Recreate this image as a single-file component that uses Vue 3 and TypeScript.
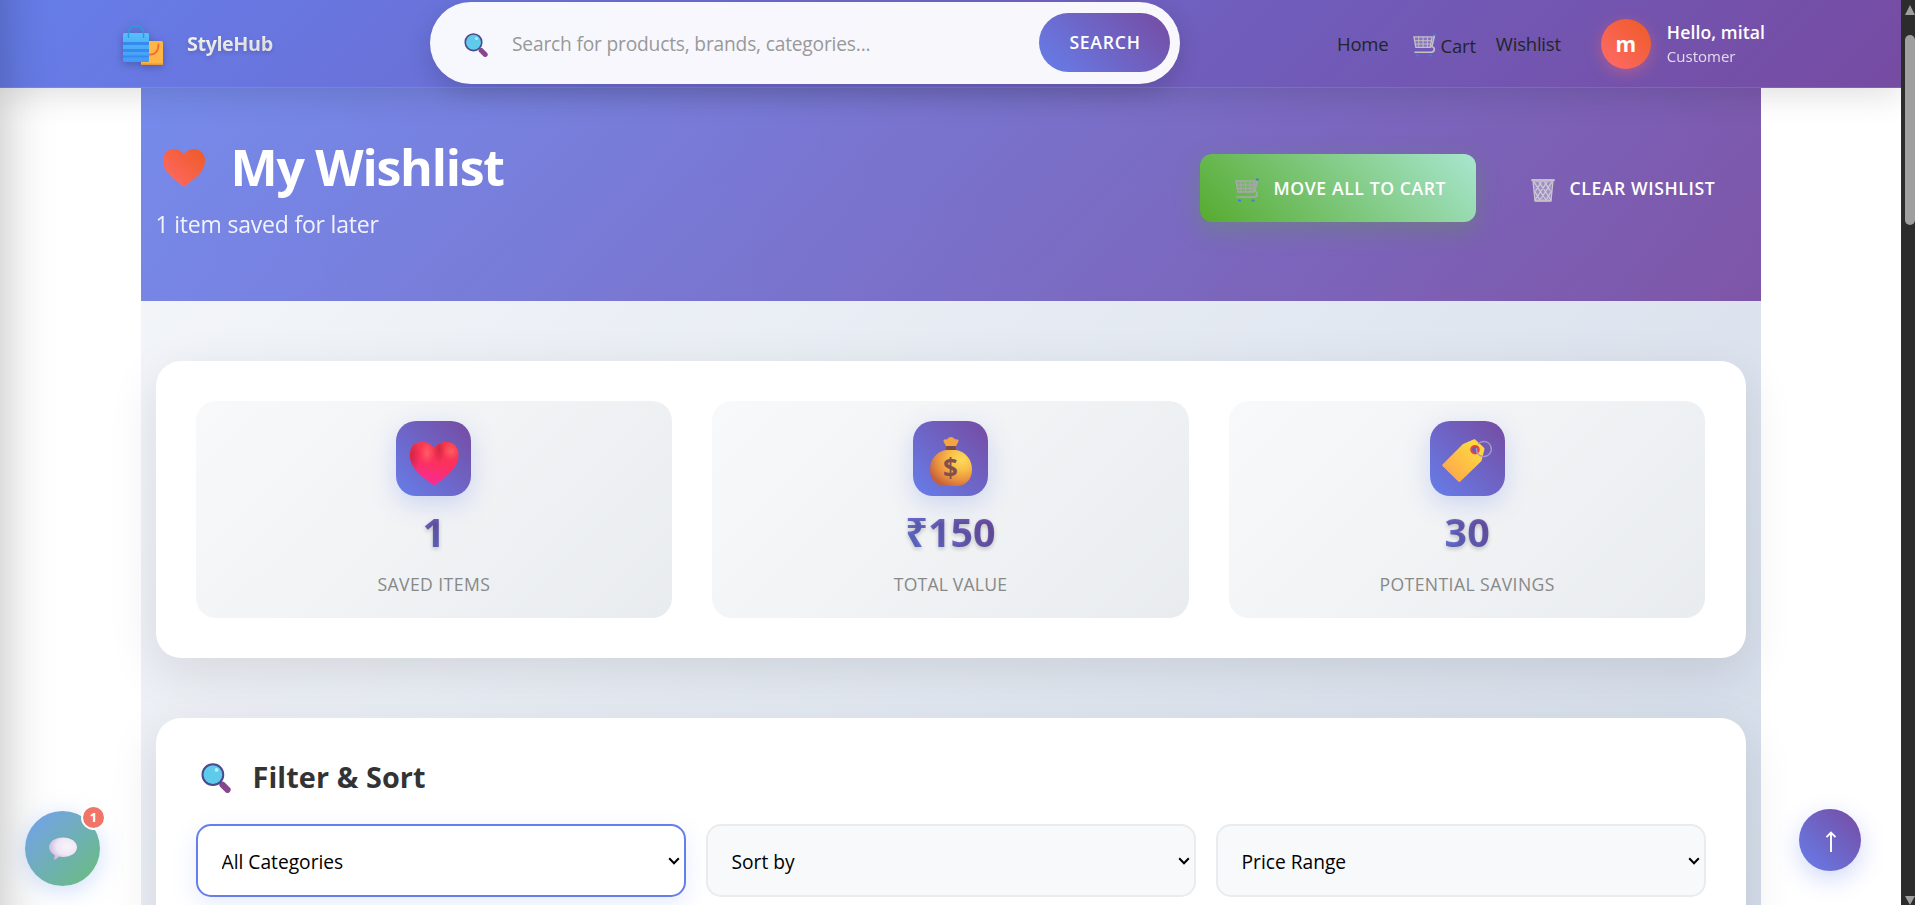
<script setup lang="ts">
interface Stat {
  kind: 'heart' | 'money' | 'tag'
  value: string
  label: string
}

const stats: Stat[] = [
  { kind: 'heart', value: '1', label: 'Saved Items' },
  { kind: 'money', value: '₹150', label: 'Total Value' },
  { kind: 'tag', value: '30', label: 'Potential Savings' },
]
const filters: string[] = ['All Categories', 'Sort by', 'Price Range']
</script>

<template>
  <div class="window">
    <div class="viewport">
      <header class="topbar">
        <div class="brand">
          <svg class="brand-icon" width="40" height="41" viewBox="0 0 40 41">
            <defs>
              <linearGradient id="bagBlue" x1="0" y1="0" x2="0" y2="1">
                <stop offset="0" stop-color="#56c0f8" /><stop offset="1" stop-color="#4398fa" />
              </linearGradient>
            </defs>
            <rect x="18" y="16" width="22" height="24" rx="1.5" fill="#fdb545" />
            <path d="M18.500 40h21v-1.500h-21z" fill="#e5963f" />
            <path d="M35.500 19.500c0 7-4 10.500-9 10" fill="none" stroke="#ef6a35" stroke-width="1.800" stroke-linecap="round" />
            <rect x="0" y="8" width="26" height="29" rx="1.500" fill="url(#bagBlue)" />
            <path d="M0 17h26v3H0zM0 24h26v3H0zM0 30.500h26v2H0z" fill="#348aee" />
            <path d="M5.500 13V8.500C5.500-2 20.500-2 20.500 8.500V13" fill="none" stroke="#2b9ae0" stroke-width="1.500" />
          </svg>
          <span class="brand-name">StyleHub</span>
        </div>

        <div class="search">
          <svg class="search-icon" width="24" height="24" viewBox="0 0 24 24">
            <path d="M17.200 17.400l4 4" stroke="#85488a" stroke-width="5" stroke-linecap="round" />
            <circle cx="9.500" cy="9.300" r="8.300" fill="#5ecbec" stroke="#4c4a8c" stroke-width="1.600" />
            <circle cx="12.500" cy="5.500" r="1.500" fill="#b5eefc" />
          </svg>
          <span class="placeholder">Search for products, brands, categories...</span>
          <button class="search-btn">SEARCH</button>
        </div>

        <nav class="nav">
          <a>Home</a>
          <a class="cart-link">
            <svg width="25" height="23" viewBox="0 0 24 24">
              <path d="M1 3h19l-2 11H3z" fill="#c9c4cf" fill-opacity=".25" stroke="#c4c0c8" stroke-width="1.400" />
              <path d="M6 3v11M10.500 3v11M15 3v11M1.500 7h18M2.200 10.500h16.500" stroke="#c4c0c8" stroke-width="1" />
              <path d="M22.500 1l-3 13M18 13c6 0 5 6 1 6H1.500" fill="none" stroke="#c4c0c8" stroke-width="1.700" />
              <path d="M22.500 1h.8M4 22.500h1.200M17.500 22.500h1.200" stroke="#3b7fdb" stroke-width="2" stroke-linecap="round" />
            </svg>
            <span>Cart</span>
          </a>
          <a>Wishlist</a>
        </nav>

        <div class="user">
          <div class="avatar">m</div>
          <div class="user-text">
            <span class="hello">Hello, mital</span>
            <span class="role">Customer</span>
          </div>
        </div>
      </header>

      <main class="page">
        <section class="hero">
          <div class="hero-copy">
            <h1 class="hero-title">
              <svg width="42" height="38" viewBox="0 0 42 38">
                <defs>
                  <linearGradient id="coral" x1="0" y1="1" x2="1" y2="0">
                    <stop offset="0" stop-color="#ff6b6b" /><stop offset="1" stop-color="#ee5a24" />
                  </linearGradient>
                </defs>
                <path d="M21 38C11 30 0 23 0 12 0 4.500 5 0 11 0c4.500 0 8 2.500 10 5.500C23 2.500 26.500 0 31 0c6 0 11 4.500 11 12 0 11-11 18-21 26z" fill="url(#coral)" />
              </svg>
              <span>My Wishlist</span>
            </h1>
            <p class="hero-sub">1 item saved for later</p>
          </div>
          <div class="hero-actions">
            <button class="btn move">
              <svg width="24" height="24" viewBox="0 0 24 24">
                <path d="M1 3h19l-2 11H3z" fill="#a9a9a9" fill-opacity=".3" stroke="#a9a7ac" stroke-width="1.400" />
                <path d="M6 3v11M10.500 3v11M15 3v11M1.500 7h18M2.200 10.500h16.500" stroke="#a9a7ac" stroke-width="1" />
                <path d="M22.500 1l-3 13M18 13c6 0 5 6 1 6H1.500" fill="none" stroke="#a9a7ac" stroke-width="1.700" />
                <path d="M21.800 1.500h1.200M4 22.500h1.200M17.500 22.500h1.200" stroke="#3b7fdb" stroke-width="2" stroke-linecap="round" />
              </svg>
              <span>MOVE ALL TO CART</span>
            </button>
            <button class="btn clear">
              <svg width="24" height="24" viewBox="0 0 24 24">
                <path d="M2 3h20l-2 20H4z" fill="#cfcbd6" fill-opacity=".45" stroke="#cbc7d2" stroke-width="1.200" />
                <path d="M3 4l10 15 3 4M8 4l10 15 2 3M13.500 4l6 9M3.500 13l6 10M21 4L11 19l-3 4M16 4L6 19l-2 3M10.500 4l-6 9M20.500 13l-6 10" fill="none" stroke="#d3cfda" stroke-width="1.200" />
                <path d="M1.200 2.200h21.600M4.500 22.600h15" stroke="#c3bfca" stroke-width="2.300" stroke-linecap="round" />
              </svg>
              <span>CLEAR WISHLIST</span>
            </button>
          </div>
        </section>

        <div class="body">
          <section class="card stats">
            <div v-for="s in stats" :key="s.label" class="stat">
              <div class="stat-icon">
                <svg v-if="s.kind === 'heart'" width="75" height="75" viewBox="0 0 75 75">
                  <defs>
                    <linearGradient id="hBase" x1="0.600" y1="0.250" x2="0.450" y2="0.900">
                      <stop offset="0" stop-color="#fa3b48" /><stop offset=".5" stop-color="#fb3060" /><stop offset="1" stop-color="#f82aa2" />
                    </linearGradient>
                    <radialGradient id="hLight" cx="0.5" cy="0.5" r="0.5">
                      <stop offset="0" stop-color="#ff6468" stop-opacity=".85" /><stop offset="1" stop-color="#ff6468" stop-opacity="0" />
                    </radialGradient>
                    <radialGradient id="hDark" cx="0.5" cy="0.5" r="0.5">
                      <stop offset="0" stop-color="#b81e3a" stop-opacity=".6" /><stop offset="1" stop-color="#b81e3a" stop-opacity="0" />
                    </radialGradient>
                    <clipPath id="hClip"><path d="M38.200 64.500C26 56 13.700 47 13.700 34 13.700 25.500 19 21 26 21c5.500 0 10 2.500 12.200 6.500C40.500 23.500 45 21 50.500 21c7 0 12 4.500 12 13 0 13-12.300 22-24.300 30.500z" /></clipPath>
                  </defs>
                  <g clip-path="url(#hClip)">
                    <rect width="75" height="75" fill="url(#hBase)" />
                    <ellipse cx="16" cy="34" rx="8" ry="20" fill="url(#hDark)" />
                    <ellipse cx="43" cy="28" rx="6" ry="15" fill="url(#hDark)" />
                    <ellipse cx="31" cy="32" rx="7" ry="12" fill="url(#hLight)" />
                    <ellipse cx="55" cy="30" rx="8" ry="9" fill="url(#hLight)" />
                  </g>
                </svg>
                <svg v-else-if="s.kind === 'money'" width="75" height="75" viewBox="0 0 75 75">
                  <defs>
                    <radialGradient id="mBag" cx="0.75" cy="0.25" r="0.85">
                      <stop offset="0" stop-color="#ffda5c" /><stop offset=".35" stop-color="#f8c048" /><stop offset=".7" stop-color="#e98f40" /><stop offset="1" stop-color="#c4603a" />
                    </radialGradient>
                  </defs>
                  <path d="M33.500 26l-3-5.500c-.5-2 1.500-2.500 3.500-2 1.500-3.500 6.500-3.500 8 0 2-.5 4 0 3.500 2l-3 5.500z" fill="#f3a443" />
                  <path d="M33 29h10c9 1.500 16 9 16 19.500C59 58 53 65 44 65H32c-9 0-15-7-15-16.500C17 38 24 30.500 33 29z" fill="url(#mBag)" />
                  <rect x="33" y="25" width="10" height="4" rx="1" fill="#7d4a4a" />
                  <text x="37.500" y="57" text-anchor="middle" class="dollar">$</text>
                </svg>
                <svg v-else width="75" height="75" viewBox="0 0 75 75">
                  <defs>
                    <linearGradient id="tagFill" x1="0" y1="1" x2="1" y2="0">
                      <stop offset=".2" stop-color="#ffac4a" /><stop offset=".8" stop-color="#fdd640" />
                    </linearGradient>
                  </defs>
                  <path d="M12.500 43.500L33 23l10.500-4.500c.8-.3 1.500-.2 2 .3l8.500 8c.5.500.6 1 .4 1.700L51.500 40 30.300 60.500c-.6.600-1.400.600-2 0L12.500 45c-.5-.5-.5-1 0-1.500z" fill="url(#tagFill)" />
                  <circle cx="45" cy="28.700" r="3.800" fill="#6a5cb8" stroke="#ea4440" stroke-width="2" />
                  <path d="M46.500 27c-.5 5 2.500 8.500 7.200 8.500a7.500 7.500 0 1 0-5.500-12.500" fill="none" stroke="#a39bc0" stroke-width="1.400" />
                </svg>
              </div>
              <div class="stat-value">{{ s.value }}</div>
              <div class="stat-label">{{ s.label }}</div>
            </div>
          </section>

          <section class="card filter">
            <h2 class="filter-title">
              <svg width="30" height="30" viewBox="0 0 24 24">
                <path d="M17.200 17.400l4 4" stroke="#85488a" stroke-width="5" stroke-linecap="round" />
                <circle cx="9.500" cy="9.300" r="8.300" fill="#5ecbec" stroke="#4c4a8c" stroke-width="1.600" />
                <circle cx="12.500" cy="5.500" r="1.500" fill="#b5eefc" />
              </svg>
              <span>Filter &amp; Sort</span>
            </h2>
            <div class="selects">
              <div v-for="(f, i) in filters" :key="f" class="select-wrap">
                <select :class="['select', { active: i === 0 }]">
                  <option>{{ f }}</option>
                </select>
                <svg class="chevron" width="12" height="8" viewBox="0 0 12 8">
                  <path d="M1.200 1.200L6 6.200l4.800-5" fill="none" stroke="#000" stroke-width="2" />
                </svg>
              </div>
            </div>
          </section>
        </div>
      </main>

      <div class="edge-panel"></div>

      <button class="chat">
        <svg width="30" height="24" viewBox="0 0 30 24">
          <defs>
            <radialGradient id="bubble" cx="0.65" cy="0.4" r="0.65">
              <stop offset="0" stop-color="#f8f4fb" /><stop offset=".6" stop-color="#eee6f4" /><stop offset="1" stop-color="#cdb9de" />
            </radialGradient>
          </defs>
          <path d="M15 .5c8 0 14 4.300 14 9.700S23 20 15 20c-1.500 0-3-.1-4.300-.4C9.500 21.500 8 22.500 6.500 22.800c-.6.100-.8-.4-.6-.9.500-1.200.8-2.500.7-4C3 16 1 13.300 1 10.200 1 4.800 7 .5 15 .5z" fill="url(#bubble)" />
        </svg>
        <span class="badge">1</span>
      </button>

      <button class="to-top">
        <svg width="12" height="22" viewBox="0 0 12 22">
          <path d="M6 21V2M1.500 6.200L6 1.700l4.500 4.500" fill="none" stroke="#fff" stroke-width="1.900" />
        </svg>
      </button>
    </div>

    <div class="scrollbar">
      <i class="arrow-up"></i>
      <i class="thumb"></i>
      <i class="arrow-down"></i>
    </div>
  </div>
</template>

<style>
html,
body {
  margin: 0;
  overflow: hidden;
  background: #fff;
}
</style>

<style scoped>
.window {
  display: flex;
  width: 1915px;
  height: 905px;
  overflow: hidden;
  font-family: 'Open Sans', 'Noto Sans', sans-serif;
}
.window * {
  box-sizing: border-box;
}
svg {
  display: block;
  flex: none;
}
button {
  border: 0;
  padding: 0;
  font-family: inherit;
  color: #fff;
}
.viewport {
  position: relative;
  display: flex;
  flex-direction: column;
  width: 1901px;
  height: 905px;
  overflow: hidden;
}
.topbar {
  position: relative;
  z-index: 5;
  flex: none;
  display: flex;
  align-items: center;
  height: 88px;
  padding-left: 123px;
  background: linear-gradient(135deg, #667eea 0%, #764ba2 100%);
  border-bottom: 1px solid rgba(255, 255, 255, 0.1);
  box-shadow: 0 8px 32px rgba(0, 0, 0, 0.12);
  white-space: nowrap;
}
.brand {
  display: flex;
  align-items: center;
  width: 307px;
}
.brand-icon {
  margin: 3px 24px 0 0;
  filter: drop-shadow(0 2px 4px rgba(0, 0, 0, 0.25));
}
.brand-name {
  font-size: 19.8px;
  font-weight: 700;
  letter-spacing: -0.42px;
  color: transparent;
  background: linear-gradient(45deg, #fff, #f0f0f0);
  -webkit-background-clip: text;
  background-clip: text;
  text-shadow: 0 2px 4px rgba(0, 0, 0, 0.15);
}
.search {
  display: flex;
  align-items: center;
  width: 750px;
  height: 82px;
  margin-top: -1px;
  padding: 0 10px 0 34px;
  border-radius: 50px;
  background: rgba(255, 255, 255, 0.95);
  box-shadow: 0 8px 25px rgba(0, 0, 0, 0.15);
}
.search-icon {
  margin: 4px 24px 0 0;
}
.placeholder {
  flex: 1;
  margin-top: 1px;
  font-size: 19.2px;
  letter-spacing: -0.19px;
  color: #999;
}
.search-btn {
  width: 131px;
  height: 59px;
  margin-bottom: 2px;
  padding-left: 1px;
  border-radius: 40px;
  background: linear-gradient(45deg, #667eea, #764ba2);
  font-size: 17.6px;
  font-weight: 600;
  letter-spacing: 0.75px;
}
.nav {
  display: flex;
  align-items: center;
  margin-left: 157px;
  font-size: 18.5px;
  letter-spacing: -0.2px;
  color: #212529;
}
.cart-link {
  display: flex;
  align-items: center;
  gap: 3px;
  margin: 3px 20px 0 24px;
}
.user {
  display: flex;
  align-items: center;
  margin-left: 40px;
}
.avatar {
  width: 50px;
  height: 50px;
  border-radius: 50%;
  background: linear-gradient(45deg, #ff6b6b, #ee5a24);
  box-shadow: 0 4px 15px rgba(255, 107, 107, 0.4);
  color: #fff;
  font-size: 21px;
  font-weight: 700;
  line-height: 50px;
  text-align: center;
}
.user-text {
  display: flex;
  flex-direction: column;
  margin-left: 16px;
  color: #fff;
}
.hello {
  font-size: 17.6px;
  font-weight: 600;
  line-height: 26px;
  letter-spacing: 0.1px;
}
.role {
  font-size: 15px;
  line-height: 23px;
  opacity: 0.8;
}
.page {
  flex: none;
  width: 1620px;
  height: 2100px;
  margin-left: 140.5px;
  background: linear-gradient(135deg, #f5f7fa 0%, #c3cfe2 100%);
}
.hero {
  display: flex;
  justify-content: space-between;
  height: 213px;
  padding: 0 15px;
  background: linear-gradient(90deg, rgba(255, 255, 255, 0.1), rgba(255, 255, 255, 0.06)),
    linear-gradient(135deg, #667eea 0%, #764ba2 100%);
  color: #fff;
  white-space: nowrap;
}
.hero-title {
  display: flex;
  align-items: center;
  height: 70px;
  margin: 44px 0 0;
  padding-left: 7px;
  font-size: 50px;
  font-weight: 700;
  line-height: 70px;
  letter-spacing: -1.25px;
}
.hero-title svg {
  margin: 2px 26px 0 0;
}
.hero-sub {
  margin: 5px 0 0;
  font-size: 23px;
  line-height: 34px;
  letter-spacing: -0.2px;
  opacity: 0.9;
}
.hero-actions {
  display: flex;
  gap: 20px;
  padding-top: 66px;
}
.btn {
  display: flex;
  align-items: center;
  height: 68px;
  border-radius: 12px;
  background: transparent;
  font-size: 17.6px;
  font-weight: 600;
  letter-spacing: 0.6px;
}
.move {
  width: 276px;
  padding-left: 35px;
  background: linear-gradient(45deg, #56ab2f, #a8e6cf);
  box-shadow: 0 8px 25px rgba(86, 171, 47, 0.3);
}
.btn svg {
  margin: 3px 15px 0 0;
}
.clear {
  width: 250px;
  padding-left: 35px;
}
.body {
  padding: 60px 15px 0;
}
.card {
  border-radius: 25px;
  background: #fff;
  padding: 40px;
  box-shadow: 0 15px 50px rgba(0, 0, 0, 0.1);
}
.stats {
  display: grid;
  grid-template-columns: repeat(3, 1fr);
  gap: 40px;
  height: 297px;
}
.stat {
  display: flex;
  flex-direction: column;
  align-items: center;
  height: 217px;
  padding-top: 20px;
  border-radius: 20px;
  background: linear-gradient(135deg, #f8f9fa 0%, #e9ecef 100%);
}
.stat-icon {
  width: 75px;
  height: 75px;
  border-radius: 20px;
  background: linear-gradient(45deg, #667eea, #764ba2);
  box-shadow: 0 8px 25px rgba(102, 126, 234, 0.25);
}
.dollar {
  font: 700 26px 'Open Sans', sans-serif;
  fill: #84504b;
}
.stat-value {
  margin-top: 6px;
  font-size: 39.5px;
  font-weight: 700;
  line-height: 60px;
  color: transparent;
  background: linear-gradient(45deg, #667eea, #764ba2);
  -webkit-background-clip: text;
  background-clip: text;
  text-shadow: 0 2px 4px rgba(0, 0, 0, 0.2);
}
.stat-label {
  margin-top: 8px;
  font-size: 17.6px;
  line-height: 28px;
  letter-spacing: 0.42px;
  color: #888;
  text-transform: uppercase;
}
.stat:nth-child(2) .stat-label {
  letter-spacing: 0.18px;
}
.filter {
  margin-top: 60px;
  height: 400px;
}
.filter-title {
  display: flex;
  align-items: center;
  height: 38px;
  margin: 0 0 28px;
  padding-left: 5px;
  font-size: 28.8px;
  font-weight: 700;
  line-height: 38px;
  letter-spacing: 0.1px;
  color: #333;
}
.filter-title svg {
  margin: 2px 22px 0 0;
}
.selects {
  display: grid;
  grid-template-columns: repeat(3, 1fr);
  gap: 20px;
}
.select-wrap {
  position: relative;
}
.select {
  display: block;
  width: 100%;
  height: 73px;
  padding: 1px 24px 0;
  border: 2px solid #e9ecef;
  border-radius: 15px;
  background-color: #f8f9fa;
  color: #000;
  font-family: inherit;
  font-size: 19.2px;
  outline: none;
  appearance: none;
}
.select.active {
  border-color: #667eea;
  background-color: #fff;
  box-shadow: 0 8px 25px rgba(102, 126, 234, 0.15);
}
.chevron {
  position: absolute;
  right: 6px;
  top: 33px;
}
.edge-panel {
  position: absolute;
  z-index: 6;
  top: -60px;
  left: -300px;
  width: 300px;
  height: 1100px;
  box-shadow: 0 0 50px rgba(0, 0, 0, 0.27);
}
.chat {
  position: absolute;
  z-index: 7;
  left: 25px;
  top: 811px;
  display: grid;
  place-items: center;
  width: 75px;
  height: 75px;
  border-radius: 50%;
  background: linear-gradient(135deg, #74a0f1, #69be7b);
  box-shadow: 0 5px 25px rgba(116, 160, 241, 0.35);
}
.badge {
  position: absolute;
  right: -6px;
  top: -6px;
  width: 25px;
  height: 25px;
  border: 2px solid #fff;
  border-radius: 50%;
  background: #f07468;
  font-size: 13px;
  font-weight: 700;
  line-height: 21px;
  text-align: center;
}
.to-top {
  position: absolute;
  z-index: 7;
  left: 1799px;
  top: 809px;
  display: grid;
  place-items: center;
  width: 62px;
  height: 62px;
  border-radius: 50%;
  background: linear-gradient(45deg, #667eea, #764ba2);
  box-shadow: 0 8px 25px rgba(102, 126, 234, 0.3);
}
.to-top svg {
  margin: 4px 0 0 2px;
}
.scrollbar {
  display: flex;
  flex-direction: column;
  align-items: center;
  width: 14px;
  padding: 5px 0 0 4px;
  background: #2c2c2c;
}
.arrow-up,
.arrow-down {
  flex: none;
  border: 5px solid transparent;
}
.arrow-up {
  border-top: 0;
  border-bottom: 10px solid #9f9f9f;
}
.thumb {
  flex: none;
  width: 10px;
  height: 190px;
  margin-top: 20px;
  border-radius: 5px;
  background: #9f9f9f;
}
.arrow-down {
  margin-top: 671px;
  border-bottom: 0;
  border-top: 9px solid #9f9f9f;
}
</style>
